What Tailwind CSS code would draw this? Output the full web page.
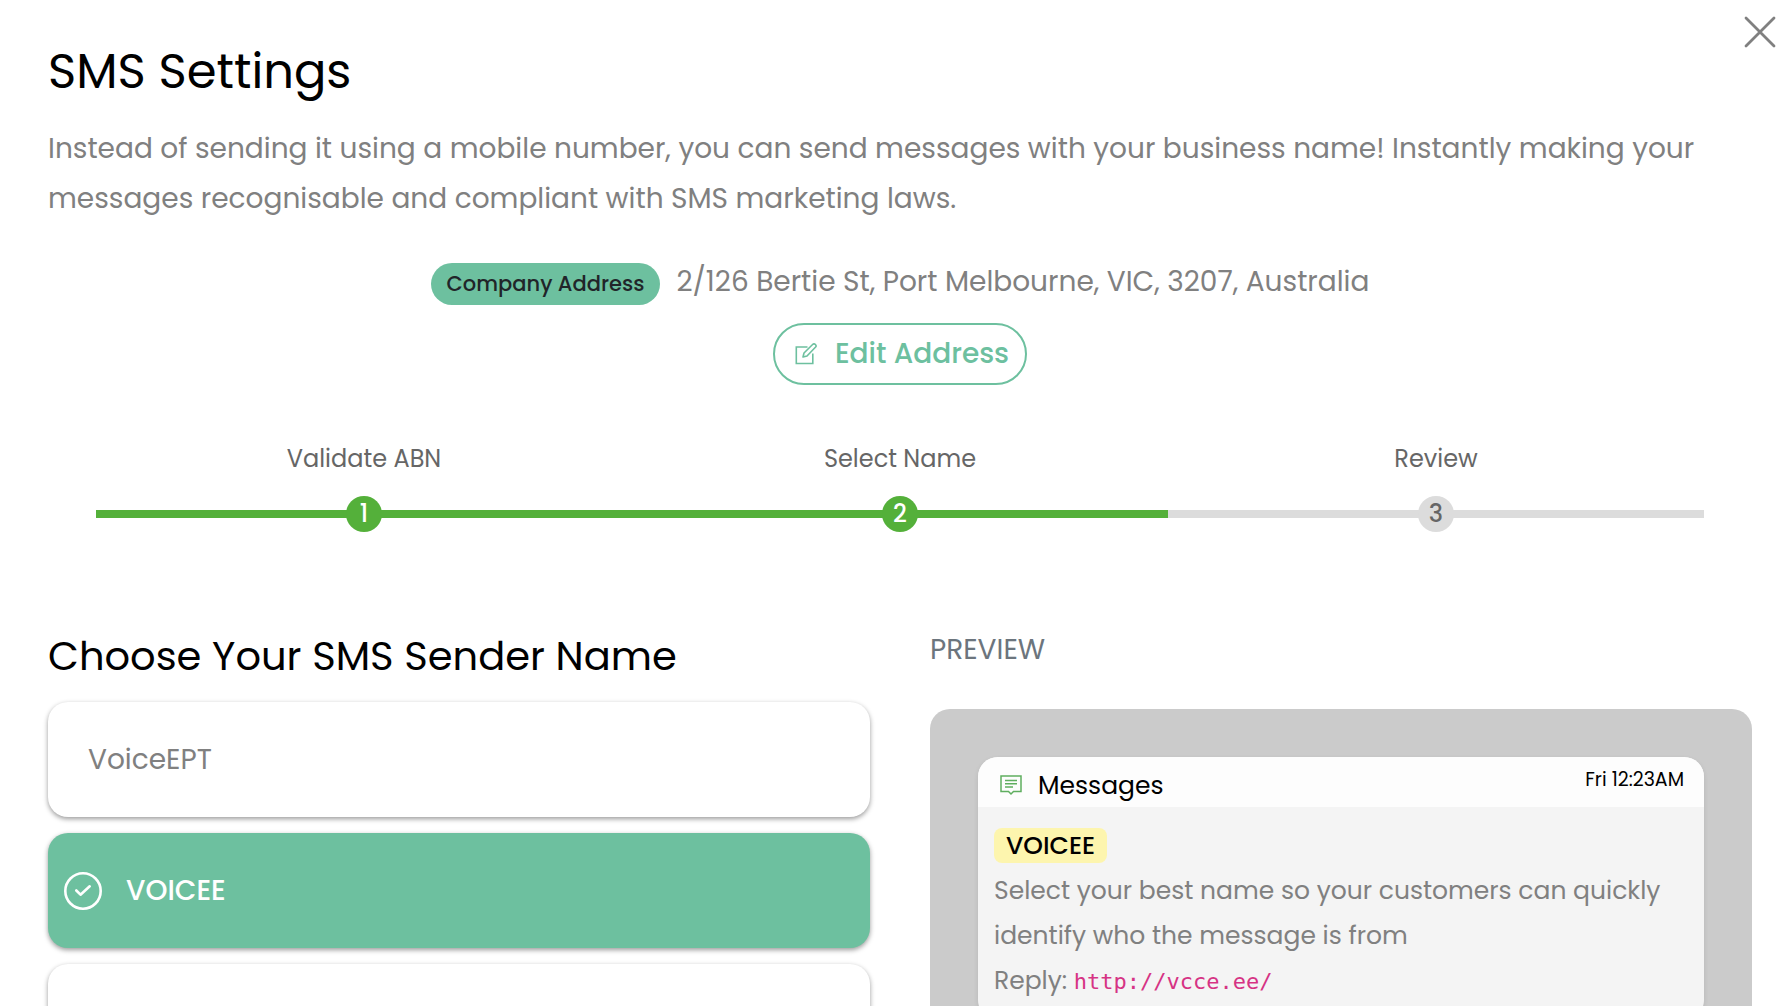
<!DOCTYPE html>
<html lang="en">
<head>
  <meta charset="UTF-8" />
  <meta name="viewport" content="width=device-width, initial-scale=1.0"/>
  <title>SMS Settings</title>
  <script src="https://cdn.jsdelivr.net/npm/@tailwindcss/browser@4"></script>
</head>
<body class="bg-white h-screen overflow-hidden font-[Poppins,Inter,sans-serif] text-[28px] leading-[50px] text-[#808080]">
  <button onclick="closeSettings()" aria-label="Close" class="absolute top-4 right-4 cursor-pointer">
    <svg class="size-8" viewBox="0 0 32 32" fill="none" stroke="#808080" stroke-width="2.8" stroke-linecap="round"><path d="M2 2l28 28M30 2L2 30"/></svg>
  </button>

  <main id="settings" class="pl-12 pr-10 pt-9">
    <h1 class="text-5xl leading-[72px] text-black">SMS Settings</h1>
    <p class="mt-4">Instead of sending it using a mobile number, you can send messages with your business name! Instantly making your messages recognisable and compliant with SMS marketing laws.</p>

    <div class="mt-[33px] flex flex-col items-center gap-4">
      <div class="flex items-baseline gap-4">
        <span class="bg-[#6dc09f] text-[#212529] text-[21px] leading-[42px] font-medium px-4 rounded-full">Company Address</span>
        <span>2/126 Bertie St, Port Melbourne, VIC, 3207, Australia</span>
      </div>
      <button class="flex items-center gap-[18px] h-[62px] pl-5 pr-4 border-2 border-[#6dc09f] rounded-full text-[#6dc09f] font-medium cursor-pointer">
        <svg class="size-[22px]" viewBox="0 0 22 22" fill="none" stroke="currentColor" stroke-width="1.6"><path d="M12.5 4H1.300v16.500h16.500V10.500"/><path d="M8 14l1-4 8.600-8.500a1.900 1.900 0 0 1 2.800 2.800L12 13z" stroke-linejoin="round"/></svg>
        Edit Address
      </button>
    </div>

    <ol class="mt-[58px] mx-12 grid grid-cols-3 text-center text-2xl text-[#666]">
      <li>
        <p>Validate ABN</p>
        <div class="mt-[21px] flex items-center">
          <span class="h-2 flex-1 bg-[#54b03a]"></span>
          <span class="size-9 -mx-px rounded-full bg-[#54b03a] text-white leading-9 font-medium">1</span>
          <span class="h-2 flex-1 bg-[#54b03a]"></span>
        </div>
      </li>
      <li>
        <p>Select Name</p>
        <div class="mt-[21px] flex items-center">
          <span class="h-2 flex-1 bg-[#54b03a]"></span>
          <span class="size-9 -mx-px rounded-full bg-[#54b03a] text-white leading-9 font-medium">2</span>
          <span class="h-2 flex-1 bg-[#54b03a]"></span>
        </div>
      </li>
      <li>
        <p>Review</p>
        <div class="mt-[21px] flex items-center">
          <span class="h-2 flex-1 bg-[#dcdcdc]"></span>
          <span class="size-9 -mx-px rounded-full bg-[#dcdcdc] leading-9 font-medium">3</span>
          <span class="h-2 flex-1 bg-[#dcdcdc]"></span>
        </div>
      </li>
    </ol>

    <div class="mt-[93px] grid grid-cols-2 gap-[60px]">
      <section>
        <h2 class="text-[40px] leading-[62px] text-black">Choose Your SMS Sender Name</h2>
        <div class="mt-[15px] flex flex-col gap-4">
          <button class="h-[115px] px-10 rounded-[20px] text-left shadow-[0_2px_5px_rgba(0,0,0,0.4)] cursor-pointer">VoiceEPT</button>
          <button class="h-[115px] px-4 flex items-center gap-6 rounded-[20px] bg-[#6dc09f] text-white font-medium shadow-[0_2px_5px_rgba(0,0,0,0.4)] cursor-pointer">
            <svg class="size-[38px]" viewBox="0 0 38 38" fill="none" stroke="currentColor" stroke-width="2.600" stroke-linecap="round" stroke-linejoin="round"><circle cx="19" cy="19" r="17.700"/><path d="M12.300 18.500l4.200 4.200 9.200-8.400"/></svg>
            VOICEE
          </button>
          <button aria-label="Sender name" class="h-[115px] px-10 rounded-[20px] text-left shadow-[0_2px_5px_rgba(0,0,0,0.4)] cursor-pointer"></button>
        </div>
      </section>

      <section>
        <h3 class="text-[#6c757d]">PREVIEW</h3>
        <div class="mt-[34px] p-12 rounded-[20px] bg-[#cbcbcb]">
          <div class="rounded-[20px] overflow-hidden bg-[#f4f4f4] shadow-[0_2px_5px_rgba(0,0,0,0.1)] text-[25px] leading-[45px]">
            <div class="h-[50px] pl-[22px] pr-5 flex bg-[#fdfdfd] text-black">
              <div class="pt-1.5 flex items-center gap-4">
                <svg class="size-[22px]" viewBox="0 0 22 22" fill="none" stroke="#5fae5f" stroke-width="1.500"><path d="M1 2h20v15.500h-7.500L11 20l-2.500-2.500H1z"/><path d="M5 6.500h12M5 9.800h12M5 13h8"/></svg>
                <span>Messages</span>
              </div>
              <span class="ml-auto text-[19px]">Fri 12:23AM</span>
            </div>
            <div class="px-4 pt-4 pb-4">
              <span class="px-3 rounded-lg bg-[#fdf5ae] text-black font-medium">VOICEE</span>
              <p>Select your best name so your customers can quickly identify who the message is from</p>
              <p>Reply: <a href="http://vcce.ee/" class="font-['DejaVu_Sans_Mono',monospace] text-[22px] text-[#d63384]">http://vcce.ee/</a></p>
            </div>
          </div>
        </div>
      </section>
    </div>
  </main>

  <script>
    function closeSettings() {
      document.getElementById("settings").classList.add("hidden")
    }
  </script>
</body>
</html>
